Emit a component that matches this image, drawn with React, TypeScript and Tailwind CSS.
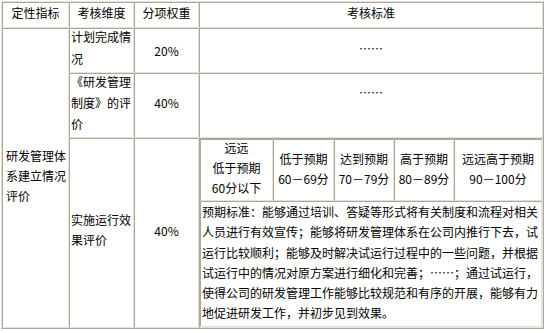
const cell =
  'border border-t-[#aca899] border-l-[#aca899] border-r-[#e4e2d8] border-b-[#e4e2d8] p-0';

const levels = [
  { w: 'w-[73px]', lines: ['远远', '低于预期', '60分以下'] },
  { w: 'w-[61px]', lines: ['低于预期', '60－69分'] },
  { w: 'w-[60px]', lines: ['达到预期', '70－79分'] },
  { w: 'w-[60px]', lines: ['高于预期', '80－89分'] },
  { w: '', lines: ['远远高于预期', '90－100分'] },
];

const standard = [
  '预期标准：能够通过培训、答疑等形式将有关制度和流程对相关',
  '人员进行有效宣传；能够将研发管理体系在公司内推行下去，试',
  '运行比较顺利；能够及时解决试运行过程中的一些问题，并根据',
  '试运行中的情况对原方案进行细化和完善；……；通过试运行，',
  '使得公司的研发管理工作能够比较规范和有序的开展，能够有力',
  '地促进研发工作，并初步见到效果。',
];

export default function App() {
  return (
    <div className="w-[548px] h-[333px] bg-white pl-[1px] pt-[1px] text-[12px] leading-[20px] text-black font-['Noto_Sans_CJK_SC','Noto_Sans',sans-serif]">
      <table className="table-fixed w-[543px] border-separate border-spacing-0 border border-t-[#e4e2d8] border-l-[#e4e2d8] border-r-[#aca899] border-b-[#aca899]">
        <colgroup>
          <col className="w-[67px]" />
          <col className="w-[65px]" />
          <col className="w-[65px]" />
          <col />
        </colgroup>
        <tbody>
          {/* header */}
          <tr className="h-[26px]">
            {['定性指标', '考核维度', '分项权重', '考核标准'].map((t) => (
              <td key={t} className={`${cell} text-center align-top`}>
                {t}
              </td>
            ))}
          </tr>

          <tr className="h-[45px]">
            <td rowSpan={3} className={`${cell} align-middle pl-[3px] pb-[4px]`}>
              研发管理体系建立情况评价
            </td>
            <td className={`${cell} align-top pl-[1px] leading-[22px]`}>
              <div className="-mt-[3px]">计划完成情况</div>
            </td>
            <td className={`${cell} text-center`}>20%</td>
            <td className={`${cell} text-center pb-[3px]`}>……</td>
          </tr>

          <tr className="h-[65px]">
            <td className={`${cell} align-top pl-[1px] leading-[21px]`}>
              <div className="-mt-[3px]">《研发管理制度》的评价</div>
            </td>
            <td className={`${cell} text-center pb-[5px]`}>40%</td>
            <td className={`${cell} text-center pb-[26px]`}>……</td>
          </tr>

          <tr className="h-[190px]">
            <td className={`${cell} align-middle pl-[1px] pb-[7px]`}>实施运行效果评价</td>
            <td className={`${cell} text-center pb-[5px]`}>40%</td>
            <td className={`${cell} align-top`}>
              <table className="table-fixed w-full border-separate border-spacing-0">
                <tbody>
                  <tr className="h-[62px]">
                    {levels.map((l, i) => (
                      <td
                        key={i}
                        className={`${cell} ${l.w} text-center ${i === 0 ? 'align-top' : 'align-middle pb-[2px]'}`}
                      >
                        <div className={i === 0 ? '-mt-[2px]' : ''}>
                          {l.lines.map((t, j) => (
                            <div key={j}>{t}</div>
                          ))}
                        </div>
                      </td>
                    ))}
                  </tr>
                  <tr>
                    <td colSpan={5} className={`${cell} h-[126px] align-top pl-[1px] leading-[20.3px] whitespace-nowrap`}>
                      {standard.map((t, i) => (
                        <div key={i}>{t}</div>
                      ))}
                    </td>
                  </tr>
                </tbody>
              </table>
            </td>
          </tr>
        </tbody>
      </table>
    </div>
  );
}
